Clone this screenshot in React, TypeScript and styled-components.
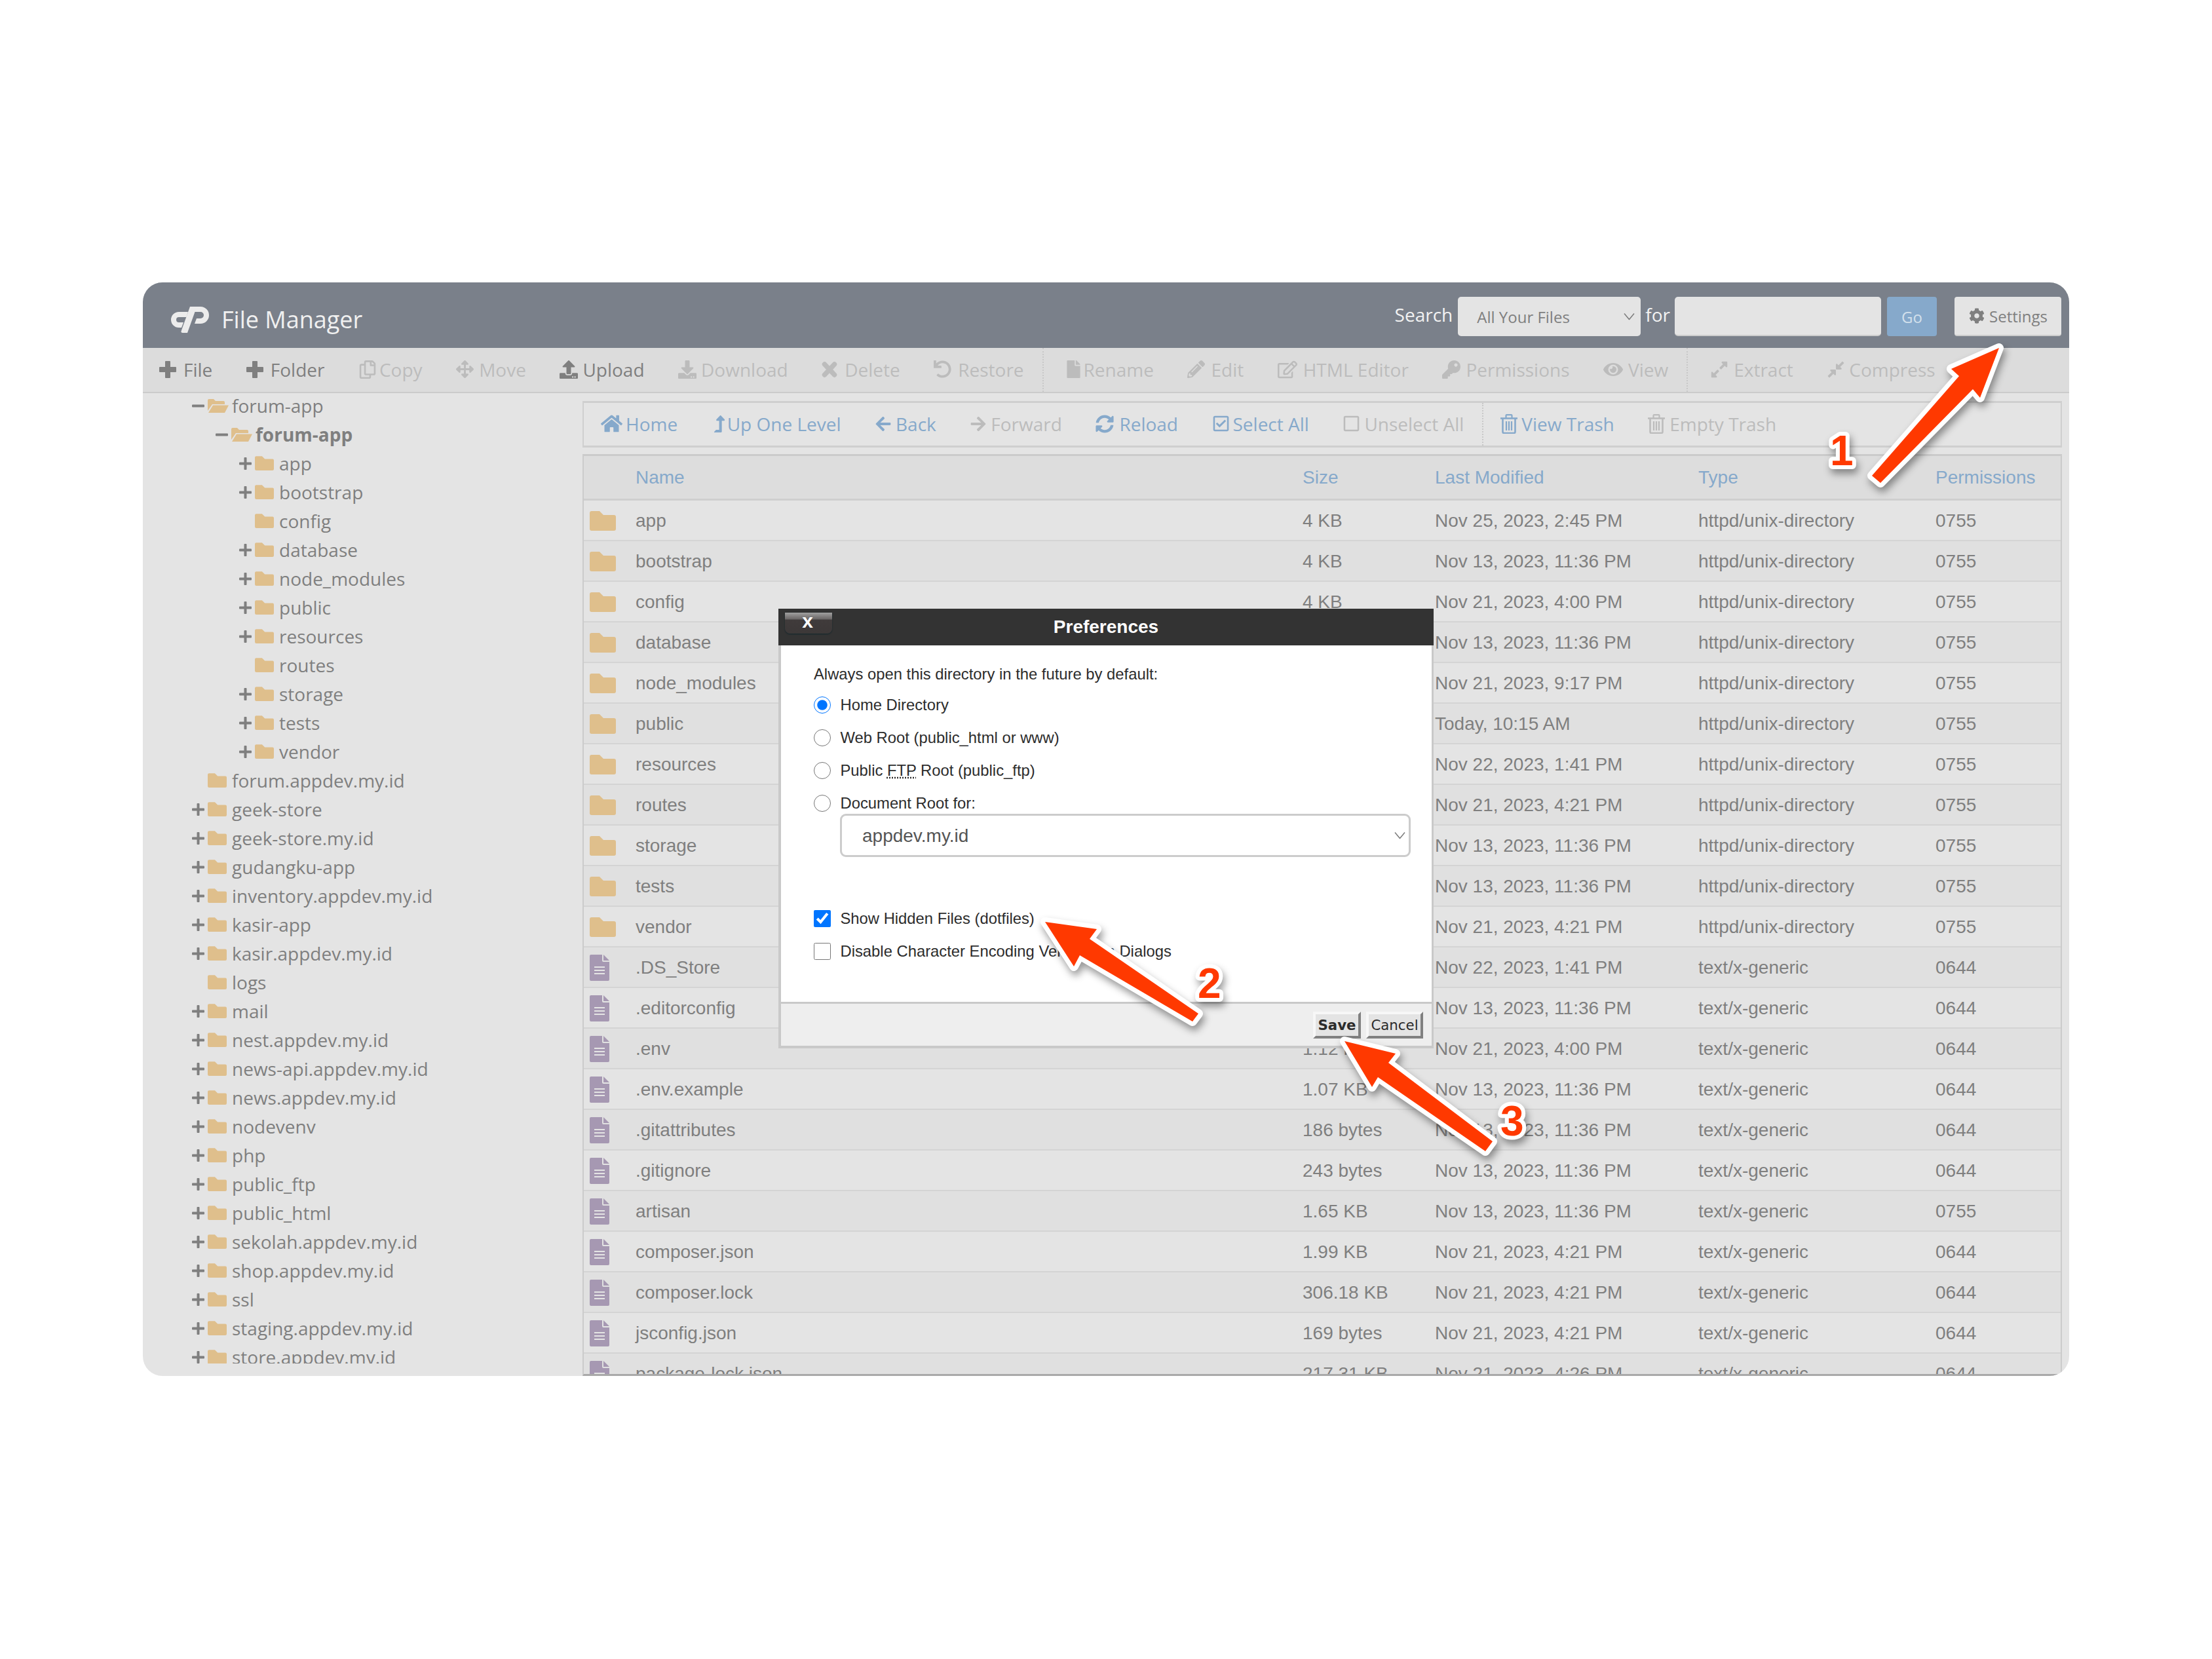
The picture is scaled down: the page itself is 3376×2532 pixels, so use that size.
import React from 'react';
import styled, { createGlobalStyle } from 'styled-components';
import {
  FaRegCopy, FaArrowsAlt, FaUpload, FaDownload, FaUndo, FaFile, FaPencilAlt, FaRegEdit,
  FaKey, FaEye, FaExpandAlt, FaCompressAlt, FaHome, FaLevelUpAlt, FaArrowLeft, FaArrowRight, FaSyncAlt,
  FaRegCheckSquare, FaRegSquare, FaCog,
} from 'react-icons/fa';

const GlobalStyle = createGlobalStyle`
  html, body { margin: 0; padding: 0; background: #fff; }
  * { box-sizing: border-box; }
`;

const OPEN = `"Open Sans", "Liberation Sans", sans-serif`;
const ARIAL = `"Liberation Sans", Arial, sans-serif`;
const INK = '#7f7f7f';
const MUTED = '#bcbcbc';
const LINK = '#86a9cb';
const LINE = '#cfcfcf';

const Page = styled.div`
  position: relative;
  width: 3376px;
  height: 2532px;
  padding: 431px 0 0 218px;
  background: #fff;
  overflow: hidden;
`;
const Window = styled.div`
  width: 2940px;
  height: 1669px;
  border-radius: 30px;
  overflow: hidden;
  display: flex;
  flex-direction: column;
  background: #e4e4e4;
  font-family: ${OPEN};
  font-size: 28px;
  color: ${INK};
`;
const Header = styled.header`
  flex: none;
  height: 100px;
  background: #7a808a;
  display: flex;
  align-items: flex-start;
  padding: 22px 12px 0 41px;
`;
const Brand = styled.div`
  display: flex;
  align-items: center;
  gap: 19px;
  height: 70px;
`;
const BrandTitle = styled.span`
  font-size: 36px;
  color: #f0f0f0;
  line-height: 70px;
`;
const SearchBar = styled.form`
  margin-left: auto;
  display: flex;
  align-items: flex-start;
`;
const SearchText = styled.label<{ $before: number; $after: number }>`
  color: #f2f2f2;
  font-size: 28px;
  line-height: 54px;
  margin: 0 ${(p) => p.$after}px 0 ${(p) => p.$before}px;
`;
const SelectShell = styled.div<{ $w: number; $h: number }>`
  position: relative;
  width: ${(p) => p.$w}px;
  height: ${(p) => p.$h}px;
  flex: none;
`;
const NativeSelect = styled.select<{ $font: string; $size: number; $pad: number; $bg: string; $color: string; $radius: number; $edge: string }>`
  width: 100%;
  height: 100%;
  appearance: none;
  background: ${(p) => p.$bg};
  border: ${(p) => p.$edge};
  border-radius: ${(p) => p.$radius}px;
  padding: 0 0 0 ${(p) => p.$pad}px;
  font-family: ${(p) => p.$font};
  font-size: ${(p) => p.$size}px;
  color: ${(p) => p.$color};
  outline: none;
`;
const Chevron = styled.svg<{ $right: number }>`
  position: absolute;
  right: ${(p) => p.$right}px;
  top: 50%;
  transform: translateY(-50%);
  pointer-events: none;
`;
const SearchField = styled.input`
  width: 315px;
  height: 60px;
  flex: none;
  background: #e4e4e4;
  border: 0;
  border-bottom: 2px solid #cdcdcd;
  border-radius: 5px;
  margin-right: 9px;
`;
const GoButton = styled.button`
  width: 76px;
  height: 60px;
  flex: none;
  background: #86a9cb;
  border: 0;
  border-radius: 4px;
  color: #d3e0ec;
  font-family: ${OPEN};
  font-size: 24px;
  margin-right: 27px;
  padding: 0;
`;
const SettingsButton = styled.button`
  width: 163px;
  height: 60px;
  flex: none;
  display: flex;
  align-items: center;
  gap: 7px;
  padding: 0 0 0 22px;
  background: #e4e4e4;
  border: 0;
  border-bottom: 2px solid #cdcdcd;
  border-radius: 4px;
  color: ${INK};
  font-family: ${OPEN};
  font-size: 24px;
`;
const MainToolbar = styled.nav`
  flex: none;
  height: 69px;
  background: #dcdcdc;
  border-bottom: 2px solid #cbcbcb;
  display: flex;
  align-items: center;
  padding: 0 0 2px 25px;
`;
const ToolItem = styled.a<{ $tone: 'ink' | 'muted' | 'link' }>`
  display: inline-flex;
  align-items: center;
  margin-right: 51.5px;
  white-space: nowrap;
  color: ${(p) => (p.$tone === 'ink' ? INK : p.$tone === 'link' ? LINK : MUTED)};
`;
const ToolIcon = styled.span<{ $w: number }>`
  display: inline-flex;
  width: ${(p) => p.$w}px;
  flex: none;
  align-items: center;
`;
const ToolDivider = styled.span<{ $after: number }>`
  align-self: stretch;
  width: 0;
  margin: 0 ${(p) => p.$after}px -2px -23.5px;
  border-left: 2px dotted #c8c8c8;
`;
const Main = styled.div`
  flex: 1;
  min-height: 0;
  display: flex;
`;
const Sidebar = styled.aside`
  flex: none;
  width: 671px;
  height: 100%;
  padding-bottom: 19px;
`;
const Tree = styled.ul`
  list-style: none;
  margin: 0;
  padding: 0;
  height: 100%;
  overflow: hidden;
`;
const TreeRow = styled.li<{ $depth: number; $bold: boolean }>`
  height: 44px;
  display: flex;
  align-items: center;
  padding-left: ${(p) => 75 + p.$depth * 36}px;
  font-weight: ${(p) => (p.$bold ? 700 : 400)};
  white-space: nowrap;
  position: relative;
  top: -3px;
`;
const TreeToggle = styled.span`
  flex: none;
  width: 24px;
  display: inline-flex;
  align-items: center;
`;
const TreeFolder = styled.span`
  flex: none;
  width: 37px;
  display: inline-flex;
  align-items: center;
`;
const Content = styled.section`
  flex: 1;
  min-width: 0;
  display: flex;
  flex-direction: column;
  padding: 12px 11px 0 0;
`;
const SubToolbar = styled.nav`
  flex: none;
  height: 71px;
  margin-bottom: 10px;
  border: 3px solid ${LINE};
  border-left-width: 2px;
  border-right-width: 2px;
  display: flex;
  align-items: center;
  padding: 0 0 2px 26px;
`;
const Table = styled.div`
  flex: 1;
  min-height: 0;
  overflow: hidden;
  border: 3px solid #cbcbcb;
  border-bottom-color: #a9a9a9;
  border-left-width: 2px;
  border-right-width: 2px;
`;
const RowBase = styled.div`
  display: grid;
  grid-template-columns: 79px 1018px 202px 402px 362px 1fr;
  align-items: center;
  font-family: ${ARIAL};
  font-size: 28px;
`;
const HeadRow = styled(RowBase)`
  height: 68px;
  background: #dddddd;
  color: ${LINK};
  border-bottom: 3px solid ${LINE};
`;
const BodyRow = styled(RowBase)<{ $alt: boolean }>`
  height: 62px;
  padding-top: 2px;
  background: ${(p) => (p.$alt ? '#e0e0e0' : '#e4e4e4')};
  color: ${INK};
  border-bottom: 2px solid #d4d4d4;
`;
const IconCell = styled.span`
  display: flex;
  align-items: center;
  padding-left: 9px;
  height: 100%;
`;
const Modal = styled.div`
  position: absolute;
  left: 1188px;
  top: 929px;
  width: 1000px;
  height: 671px;
  display: flex;
  flex-direction: column;
  font-family: ${ARIAL};
  color: #2c2c2c;
`;
const ModalTitle = styled.h2`
  position: relative;
  flex: none;
  height: 56px;
  margin: 0;
  background: #333;
  color: #fff;
  font-size: 28px;
  font-weight: 700;
  line-height: 56px;
  text-align: center;
`;
const CloseButton = styled.button`
  position: absolute;
  left: 10px;
  top: 6px;
  width: 72px;
  height: 32px;
  padding: 0 3px 7px 0;
  border: 0;
  border-radius: 0 0 8px 8px;
  background: linear-gradient(#a0a0a0 0, #6a6666 10px, #403b3b 11px, #3c3838 100%);
  box-shadow: 0 1px 2px #11262c;
  color: #fff;
  font-family: ${ARIAL};
  font-weight: 700;
  font-size: 30px;
  line-height: 24px;
`;
const ModalFrame = styled.div`
  flex: 1;
  min-height: 0;
  display: flex;
  flex-direction: column;
  border: solid #c9c9c9;
  border-width: 0 3px 4px 4px;
`;
const ModalBody = styled.div`
  flex: 1;
  min-height: 0;
  background: #fff;
  padding: 29px 0 0 50px;
  font-size: 23.8px;
`;
const Intro = styled.p`
  margin: 0 0 16px;
  line-height: 30px;
`;
const ChoiceList = styled.div<{ $top: number }>`
  display: flex;
  flex-direction: column;
  gap: 18px;
  margin-top: ${(p) => p.$top}px;
`;
const Choice = styled.label`
  display: flex;
  align-items: center;
  gap: 14.500px;
  height: 32px;
  white-space: nowrap;
`;
const ChoiceInput = styled.input`
  width: 26px;
  height: 26px;
  margin: 0;
  flex: none;
`;
const Abbr = styled.abbr`
  text-decoration: underline dotted;
`;
const DocRootSelect = styled.div`
  margin-left: 40px;
`;
const ModalFooter = styled.div`
  flex: none;
  height: 67px;
  background: #eeeeee;
  border-top: 3px solid #c9c9c9;
  display: flex;
  align-items: center;
  justify-content: flex-end;
  gap: 8px;
  padding-right: 13px;
`;
const BevelButton = styled.button<{ $w: number; $primary: boolean }>`
  width: ${(p) => p.$w}px;
  height: 41px;
  padding: 0;
  border: 4px solid;
  border-color: #f7f7f7 #808080 #808080 #f7f7f7;
  background: #e4e4e4;
  color: #2c2c2c;
  font-family: "DejaVu Sans", sans-serif;
  font-size: 21.3px;
  font-weight: ${(p) => (p.$primary ? 700 : 400)};
`;
const Annotations = styled.svg`
  position: absolute;
  left: 0;
  top: 0;
  pointer-events: none;
  filter: drop-shadow(3px 7px 6px rgba(0, 0, 0, 0.4));
`;
const ArrowShape = styled.polygon`
  fill: #ff3900;
  stroke: #fff;
  stroke-width: 14px;
  stroke-linejoin: round;
  paint-order: stroke;
`;
const Step = styled.text`
  font-family: ${ARIAL};
  font-size: 64px;
  font-weight: 700;
  fill: #ff3900;
  stroke: #fff;
  stroke-width: 12px;
  stroke-linejoin: round;
  paint-order: stroke;
`;

const CpLogo = () => (
  <svg width="60" height="40" viewBox="0 0 60 40" fill="#ececec">
    <path d="M28 8H14A12 12 0 0 0 14 32H18L21 24H14A4 4 0 0 1 14 16H25.500Z" />
    <path d="M31 0H47A13 13 0 0 1 47 26H38L41 18H47A5 5 0 0 0 47 8H38.500L27 40H20C17.500 40 17 38.500 17.700 37Z" />
  </svg>
);
const PlusIcon = () => (
  <svg width="26" height="26" viewBox="0 0 26 26" fill="currentColor">
    <path d="M9 1a1 1 0 0 1 1-1h6a1 1 0 0 1 1 1v8h8a1 1 0 0 1 1 1v6a1 1 0 0 1-1 1h-8v8a1 1 0 0 1-1 1h-6a1 1 0 0 1-1-1v-8H1a1 1 0 0 1-1-1v-6a1 1 0 0 1 1-1h8Z" />
  </svg>
);
const CrossIcon = () => (
  <svg width="24" height="24" viewBox="0 0 24 24" fill="none" stroke="currentColor" strokeWidth="7.500" strokeLinecap="round">
    <path d="M4.500 4L19.500 20M19.500 4L4.500 20" />
  </svg>
);
const FolderIcon = ({ w, h }: { w: number; h: number }) => (
  <svg width={w} height={h} viewBox="0 0 40 30" fill="#dfbf8c">
    <path d="M3 0H15L21 6H37a3 3 0 0 1 3 3V27a3 3 0 0 1-3 3H3a3 3 0 0 1-3-3V3a3 3 0 0 1 3-3Z" />
  </svg>
);
const OpenFolderIcon = () => (
  <svg width="32" height="22" viewBox="0 0 32 22" fill="#dfbf8c">
    <path d="M0 3a2 2 0 0 1 2-2h7l3 3h12a2 2 0 0 1 2 2v3H7L0 19Z" />
    <path d="M8 10.500H32L26 22H1Z" />
  </svg>
);
const FileIcon = () => (
  <svg width="30" height="40" viewBox="0 0 30 40">
    <path fill="#a698b2" d="M2 0H19V9a2 2 0 0 0 2 2H30V38a2 2 0 0 1-2 2H2a2 2 0 0 1-2-2V2a2 2 0 0 1 2-2Z" />
    <path fill="#a698b2" d="M21 0L30 9H21Z" />
    <path fill="#e4e4e4" d="M7 18h16v2H7zM7 23h16v2H7zM7 28h16v2H7z" />
  </svg>
);
const TrashIcon = () => (
  <svg width="26" height="30" viewBox="0 0 26 30" fill="none" stroke="currentColor" strokeWidth="2.200">
    <path d="M0 6.500H26" strokeWidth="2.600" />
    <path d="M8.500 6V2.200a1 1 0 0 1 1-1h7a1 1 0 0 1 1 1V6" />
    <path d="M3.500 6.500V27a2 2 0 0 0 2 2h15a2 2 0 0 0 2-2V6.500" strokeWidth="2.600" />
    <path d="M9 11V25M13 11V25M17 11V25" />
  </svg>
);
const ToggleGlyph = ({ open }: { open: boolean }) => (
  <svg width="19" height="19" viewBox="0 0 19 19" fill="#7f7f7f">
    <rect x="0" y="7.500" width="19" height="4" rx="1" />
    {!open && <rect x="7.500" y="0" width="4" height="19" rx="1" />}
  </svg>
);
const Caret = ({ right }: { right: number }) => (
  <Chevron $right={right} width="17" height="11" viewBox="0 0 17 11" fill="none" stroke="#7c7c7c" strokeWidth="1.500">
    <path d="M1 1l7.500 9 7.500-9" />
  </Chevron>
);

type Tool = { label: string; tone: 'ink' | 'muted' | 'link'; icon: React.ReactNode; w: number; after?: number };

const mainTools: Tool[] = [
  { label: 'File', tone: 'ink', icon: <PlusIcon />, w: 37 },
  { label: 'Folder', tone: 'ink', icon: <PlusIcon />, w: 37 },
  { label: 'Copy', tone: 'muted', icon: <FaRegCopy size={28} />, w: 32 },
  { label: 'Move', tone: 'muted', icon: <FaArrowsAlt size={27} />, w: 35 },
  { label: 'Upload', tone: 'ink', icon: <FaUpload size={28} />, w: 35 },
  { label: 'Download', tone: 'muted', icon: <FaDownload size={28} />, w: 35 },
  { label: 'Delete', tone: 'muted', icon: <CrossIcon />, w: 35 },
  { label: 'Restore', tone: 'muted', icon: <FaUndo size={27} />, w: 37, after: 32 },
  { label: 'Rename', tone: 'muted', icon: <FaFile size={27} />, w: 29 },
  { label: 'Edit', tone: 'muted', icon: <FaPencilAlt size={27} />, w: 36 },
  { label: 'HTML Editor', tone: 'muted', icon: <FaRegEdit size={30} />, w: 39 },
  { label: 'Permissions', tone: 'muted', icon: <FaKey size={28} />, w: 36 },
  { label: 'View', tone: 'muted', icon: <FaEye size={30} />, w: 38, after: 34 },
  { label: 'Extract', tone: 'muted', icon: <FaExpandAlt size={28} />, w: 36 },
  { label: 'Compress', tone: 'muted', icon: <FaCompressAlt size={28} />, w: 34 },
];
const subTools: Tool[] = [
  { label: 'Home', tone: 'link', icon: <FaHome size={33} />, w: 38 },
  { label: 'Up One Level', tone: 'link', icon: <FaLevelUpAlt size={26} />, w: 24 },
  { label: 'Back', tone: 'link', icon: <FaArrowLeft size={26} />, w: 32 },
  { label: 'Forward', tone: 'muted', icon: <FaArrowRight size={26} />, w: 32 },
  { label: 'Reload', tone: 'link', icon: <FaSyncAlt size={28} />, w: 36 },
  { label: 'Select All', tone: 'link', icon: <FaRegCheckSquare size={27} />, w: 32 },
  { label: 'Unselect All', tone: 'muted', icon: <FaRegSquare size={27} />, w: 33, after: 26 },
  { label: 'View Trash', tone: 'link', icon: <TrashIcon />, w: 32 },
  { label: 'Empty Trash', tone: 'muted', icon: <TrashIcon />, w: 33 },
];

type Node = { name: string; depth: number; toggle: 'open' | 'plus' | 'none'; bold?: boolean };
const plus2 = (name: string): Node => ({ name, depth: 2, toggle: 'plus' });
const plus0 = (name: string): Node => ({ name, depth: 0, toggle: 'plus' });
const tree: Node[] = [
  { name: 'forum-app', depth: 0, toggle: 'open' },
  { name: 'forum-app', depth: 1, toggle: 'open', bold: true },
  plus2('app'),
  plus2('bootstrap'),
  { name: 'config', depth: 2, toggle: 'none' },
  plus2('database'),
  plus2('node_modules'),
  plus2('public'),
  plus2('resources'),
  { name: 'routes', depth: 2, toggle: 'none' },
  plus2('storage'),
  plus2('tests'),
  plus2('vendor'),
  { name: 'forum.appdev.my.id', depth: 0, toggle: 'none' },
  plus0('geek-store'),
  plus0('geek-store.my.id'),
  plus0('gudangku-app'),
  plus0('inventory.appdev.my.id'),
  plus0('kasir-app'),
  plus0('kasir.appdev.my.id'),
  { name: 'logs', depth: 0, toggle: 'none' },
  plus0('mail'),
  plus0('nest.appdev.my.id'),
  plus0('news-api.appdev.my.id'),
  plus0('news.appdev.my.id'),
  plus0('nodevenv'),
  plus0('php'),
  plus0('public_ftp'),
  plus0('public_html'),
  plus0('sekolah.appdev.my.id'),
  plus0('shop.appdev.my.id'),
  plus0('ssl'),
  plus0('staging.appdev.my.id'),
  plus0('store.appdev.my.id'),
];

const D = 'httpd/unix-directory';
const T = 'text/x-generic';
const N13 = 'Nov 13, 2023, 11:36 PM';
const N21 = 'Nov 21, 2023, 4:21 PM';
const files: [string, string, string, string, string, boolean][] = [
  ['app', '4 KB', 'Nov 25, 2023, 2:45 PM', D, '0755', true],
  ['bootstrap', '4 KB', N13, D, '0755', true],
  ['config', '4 KB', 'Nov 21, 2023, 4:00 PM', D, '0755', true],
  ['database', '4 KB', N13, D, '0755', true],
  ['node_modules', '20 KB', 'Nov 21, 2023, 9:17 PM', D, '0755', true],
  ['public', '4 KB', 'Today, 10:15 AM', D, '0755', true],
  ['resources', '4 KB', 'Nov 22, 2023, 1:41 PM', D, '0755', true],
  ['routes', '4 KB', N21, D, '0755', true],
  ['storage', '4 KB', N13, D, '0755', true],
  ['tests', '4 KB', N13, D, '0755', true],
  ['vendor', '4 KB', N21, D, '0755', true],
  ['.DS_Store', '6 KB', 'Nov 22, 2023, 1:41 PM', T, '0644', false],
  ['.editorconfig', '258 bytes', N13, T, '0644', false],
  ['.env', '1.12 KB', 'Nov 21, 2023, 4:00 PM', T, '0644', false],
  ['.env.example', '1.07 KB', N13, T, '0644', false],
  ['.gitattributes', '186 bytes', N13, T, '0644', false],
  ['.gitignore', '243 bytes', N13, T, '0644', false],
  ['artisan', '1.65 KB', N13, T, '0755', false],
  ['composer.json', '1.99 KB', N21, T, '0644', false],
  ['composer.lock', '306.18 KB', N21, T, '0644', false],
  ['jsconfig.json', '169 bytes', N21, T, '0644', false],
  ['package-lock.json', '217.31 KB', 'Nov 21, 2023, 4:26 PM', T, '0644', false],
];

const Toolset = ({ tools }: { tools: Tool[] }) => (
  <>
    {tools.map((t) => (
      <React.Fragment key={t.label}>
        <ToolItem $tone={t.tone}>
          <ToolIcon $w={t.w}>{t.icon}</ToolIcon>
          {t.label}
        </ToolItem>
        {t.after !== undefined && <ToolDivider $after={t.after} />}
      </React.Fragment>
    ))}
  </>
);

export default function App() {
  return (
    <Page>
      <GlobalStyle />
      <Window>
        <Header>
          <Brand>
            <CpLogo />
            <BrandTitle>File Manager</BrandTitle>
          </Brand>
          <SearchBar>
            <SearchText $before={0} $after={8}>Search</SearchText>
            <SelectShell $w={279} $h={60}>
              <NativeSelect $font={OPEN} $size={24} $pad={29} $bg="#e4e4e4" $color={INK} $radius={5} $edge="0" defaultValue="all">
                <option value="all">All Your Files</option>
              </NativeSelect>
              <Caret right={9} />
            </SelectShell>
            <SearchText $before={7} $after={7}>for</SearchText>
            <SearchField />
            <GoButton type="button">Go</GoButton>
            <SettingsButton type="button">
              <FaCog size={24} />
              Settings
            </SettingsButton>
          </SearchBar>
        </Header>
        <MainToolbar>
          <Toolset tools={mainTools} />
        </MainToolbar>
        <Main>
          <Sidebar>
            <Tree>
              {tree.map((n, i) => (
                <TreeRow key={i} $depth={n.depth} $bold={!!n.bold}>
                  <TreeToggle>{n.toggle !== 'none' && <ToggleGlyph open={n.toggle === 'open'} />}</TreeToggle>
                  <TreeFolder>{n.toggle === 'open' ? <OpenFolderIcon /> : <FolderIcon w={29} h={22} />}</TreeFolder>
                  {n.name}
                </TreeRow>
              ))}
            </Tree>
          </Sidebar>
          <Content>
            <SubToolbar>
              <Toolset tools={subTools} />
            </SubToolbar>
            <Table>
              <HeadRow>
                <span />
                <span>Name</span>
                <span>Size</span>
                <span>Last Modified</span>
                <span>Type</span>
                <span>Permissions</span>
              </HeadRow>
              {files.map(([name, size, date, type, perm, isDir], i) => (
                <BodyRow key={name} $alt={i % 2 === 1}>
                  <IconCell>{isDir ? <FolderIcon w={40} h={30} /> : <FileIcon />}</IconCell>
                  <span>{name}</span>
                  <span>{size}</span>
                  <span>{date}</span>
                  <span>{type}</span>
                  <span>{perm}</span>
                </BodyRow>
              ))}
            </Table>
          </Content>
        </Main>
      </Window>

      <Modal>
        <ModalTitle>
          <CloseButton type="button">x</CloseButton>
          Preferences
        </ModalTitle>
        <ModalFrame>
          <ModalBody>
            <Intro>Always open this directory in the future by default:</Intro>
            <ChoiceList $top={0}>
              <Choice><ChoiceInput type="radio" name="dir" defaultChecked /><span>Home Directory</span></Choice>
              <Choice><ChoiceInput type="radio" name="dir" /><span>Web Root (public_html or www)</span></Choice>
              <Choice><ChoiceInput type="radio" name="dir" /><span>Public <Abbr title="File Transfer Protocol">FTP</Abbr> Root (public_ftp)</span></Choice>
              <Choice><ChoiceInput type="radio" name="dir" /><span>Document Root for:</span></Choice>
            </ChoiceList>
            <DocRootSelect>
              <SelectShell $w={871} $h={66}>
                <NativeSelect $font={ARIAL} $size={28} $pad={31} $bg="#fff" $color="#555" $radius={9} $edge="3px solid #cccccc" defaultValue="a">
                  <option value="a">appdev.my.id</option>
                </NativeSelect>
                <Caret right={8} />
              </SelectShell>
            </DocRootSelect>
            <ChoiceList $top={78}>
              <Choice><ChoiceInput type="checkbox" defaultChecked /><span>Show Hidden Files (dotfiles)</span></Choice>
              <Choice><ChoiceInput type="checkbox" /><span>Disable Character Encoding Verification Dialogs</span></Choice>
            </ChoiceList>
          </ModalBody>
          <ModalFooter>
            <BevelButton type="button" $w={73} $primary>Save</BevelButton>
            <BevelButton type="button" $w={87} $primary={false}>Cancel</BevelButton>
          </ModalFooter>
        </ModalFrame>
      </Modal>

      <Annotations width="3376" height="2532" viewBox="0 0 3376 2532">
        <ArrowShape points="3051,531 2978,563 2990,574 2857,726 2870,737 3011,594 3022,607" />
        <ArrowShape points="1595,1407 1674,1418 1663,1433 1829,1547 1820,1559 1648,1458 1639,1475" />
        <ArrowShape points="2052,1589 2130,1608 2119,1622 2278,1742 2267,1757 2103,1644 2094,1659" />
        <Step x="2793" y="710">1</Step>
        <Step x="1828" y="1523">2</Step>
        <Step x="2290" y="1733">3</Step>
      </Annotations>
    </Page>
  );
}
